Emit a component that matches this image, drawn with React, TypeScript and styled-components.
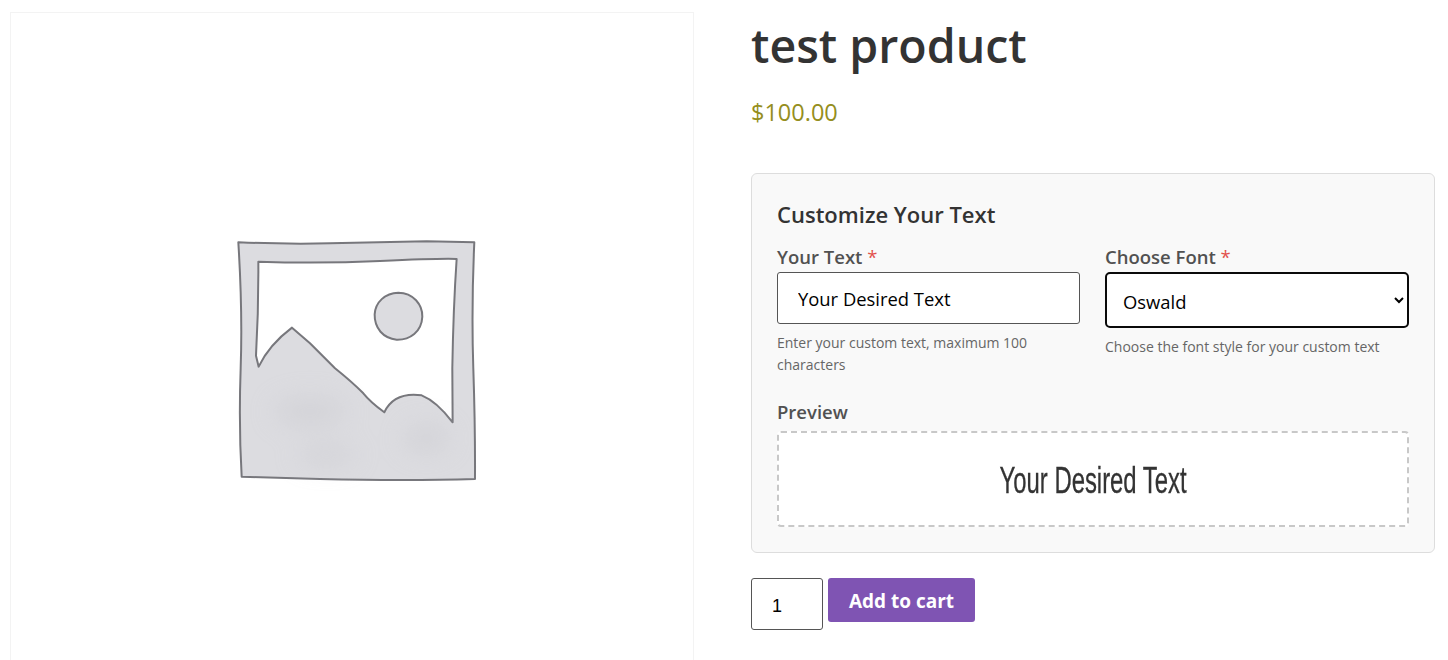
import React from "react";
import styled, { createGlobalStyle } from "styled-components";

const GlobalStyle = createGlobalStyle`
  html, body {
    margin: 0;
    height: 660px;
    overflow: hidden;
    background: #fff;
    font-family: "Open Sans", "Noto Sans", sans-serif;
    color: #515151;
  }
`;

const Page = styled.div`
  display: flex;
  align-items: flex-start;
  gap: 57px;
  padding: 12px 13px 0 10px;
`;

const Gallery = styled.div`
  flex: 0 0 684px;
  height: 648px;
  overflow: hidden;
  box-sizing: border-box;
  border: 1px solid #f3f3f3;
  border-bottom: 0;
`;

const PlaceholderSvg = styled.svg`
  display: block;
  width: 682px;
  height: 682px;
`;

const Summary = styled.div`
  flex: 1;
  min-width: 0;
`;

const Title = styled.h1`
  margin: 0;
  font-size: 46.5px;
  line-height: 66px;
  font-weight: 600;
  color: #333;
`;

const Price = styled.p`
  margin: 18px 0 0;
  font-size: 23.5px;
  line-height: 32px;
  color: #958e20;
`;

const Panel = styled.div`
  margin-top: 45px;
  padding: 25px;
  background: #f9f9f9;
  border: 1px solid #ddd;
  border-radius: 6px;
`;

const PanelTitle = styled.h3`
  margin: 0 0 16px;
  font-size: 22px;
  line-height: 30px;
  font-weight: 600;
  color: #333;
`;

const Fields = styled.div`
  display: grid;
  grid-template-columns: 303px 304px;
  gap: 25px;
`;

const Field = styled.div`
  min-width: 0;
`;

const Label = styled.label`
  display: block;
  font-size: 18.5px;
  line-height: 24px;
  font-weight: 600;
  color: #515151;
`;

const Required = styled.span`
  font-weight: 400;
  color: #e2504c;
`;

const TextInput = styled.input`
  display: block;
  box-sizing: border-box;
  width: 100%;
  height: 52px;
  margin-top: 3px;
  padding: 0 20px;
  background: #fff;
  border: 1px solid #555;
  border-radius: 3px;
  font: 18.4px "Open Sans", sans-serif;
  color: #000;
`;

const FontSelect = styled.select`
  display: block;
  box-sizing: border-box;
  width: 100%;
  height: 56px;
  margin-top: 3px;
  padding: 2px 12px 0;
  background: #fff;
  border: 2px solid #0a0a0a;
  border-radius: 5px;
  font: 18.4px "Open Sans", sans-serif;
  color: #000;
`;

const Hint = styled.p`
  margin: 8px 0 0;
  font-size: 14px;
  line-height: 22px;
  color: #666;
`;

const PreviewLabel = styled(Label)`
  margin-top: 24px;
`;

const PreviewBox = styled.div`
  display: flex;
  align-items: center;
  justify-content: center;
  box-sizing: border-box;
  height: 96px;
  margin-top: 7px;
  padding-top: 3px;
  background: #fff;
  border: 2px dashed #c8c8c8;
  border-radius: 4px;
`;

// Oswald is not installed, so squeeze a regular sans to its proportions
const PreviewText = styled.span`
  display: inline-block;
  font-family: "Liberation Sans", sans-serif;
  font-size: 36px;
  white-space: nowrap;
  transform: scaleX(0.663);
  -webkit-text-stroke: 0.3px #333;
  color: #333;
`;

const CartRow = styled.div`
  display: flex;
  align-items: flex-start;
  gap: 5px;
  margin-top: 25px;
`;

const Qty = styled.input`
  box-sizing: border-box;
  width: 72px;
  height: 52px;
  padding: 4px 20px 0;
  background: #fff;
  border: 1px solid #555;
  border-radius: 3px;
  font: 18px "Liberation Sans", sans-serif;
  color: #000;
`;

const AddButton = styled.button`
  width: 147px;
  height: 44px;
  padding: 2px 0 0;
  background: #7f54b3;
  border: 0;
  border-radius: 3px;
  font: 700 19px "Open Sans", sans-serif;
  color: #fff;
`;

function Placeholder() {
  return (
    <PlaceholderSvg viewBox="0 0 682 682" aria-hidden="true">
      <defs>
        <filter id="soft" x="-5%" y="-5%" width="110%" height="110%">
          <feGaussianBlur stdDeviation="1.8" />
        </filter>
        <filter id="blotch" x="-80%" y="-80%" width="260%" height="260%">
          <feGaussianBlur stdDeviation="36" />
        </filter>
      </defs>
      <g transform="translate(209 212) scale(0.3333)">
        <g filter="url(#soft)">
          <path
            fillRule="evenodd"
            strokeLinejoin="round"
            d="M55 52 Q200 58 330 55 T620 49 L763 52 Q754 250 760 430 T765 762 Q560 768 300 762 L65 755 Q56 600 62 430 T55 52 Z
               M115 110 Q300 116 480 108 T710 102 Q700 250 697 430 L698 592 C670 555 640 525 605 511 C560 505 515 515 493 562 C470 545 450 530 430 505 C400 475 370 450 345 430 C310 395 290 375 270 355 L216 308 C180 335 140 375 116 425 L108 392 Q116 250 115 110 Z"
            fill="#dcdce0"
            stroke="#77777c"
            strokeWidth="6"
          />
          <path
            d="M535 203 C580 203 608 240 607 275 C605 320 570 345 530 344 C490 340 463 310 464 268 C466 232 495 204 535 203 Z"
            fill="#dcdce0"
            stroke="#77777c"
            strokeWidth="6"
          />
        </g>
        <g filter="url(#blotch)" fill="#cbcbd0" opacity="0.5">
          <ellipse cx="270" cy="560" rx="110" ry="45" />
          <ellipse cx="620" cy="640" rx="70" ry="45" />
          <ellipse cx="320" cy="690" rx="90" ry="30" />
        </g>
      </g>
    </PlaceholderSvg>
  );
}

export default function App() {
  return (
    <>
      <GlobalStyle />
      <Page>
        <Gallery>
          <Placeholder />
        </Gallery>
        <Summary>
          <Title>test product</Title>
          <Price>$100.00</Price>
          <Panel>
            <PanelTitle>Customize Your Text</PanelTitle>
            <Fields>
              <Field>
                <Label>
                  Your Text <Required>*</Required>
                </Label>
                <TextInput defaultValue="Your Desired Text" />
                <Hint>Enter your custom text, maximum 100 characters</Hint>
              </Field>
              <Field>
                <Label>
                  Choose Font <Required>*</Required>
                </Label>
                <FontSelect defaultValue="Oswald">
                  <option>Oswald</option>
                </FontSelect>
                <Hint>Choose the font style for your custom text</Hint>
              </Field>
            </Fields>
            <PreviewLabel>Preview</PreviewLabel>
            <PreviewBox>
              <PreviewText>Your Desired Text</PreviewText>
            </PreviewBox>
          </Panel>
          <CartRow>
            <Qty type="number" defaultValue={1} />
            <AddButton>Add to cart</AddButton>
          </CartRow>
        </Summary>
      </Page>
    </>
  );
}
